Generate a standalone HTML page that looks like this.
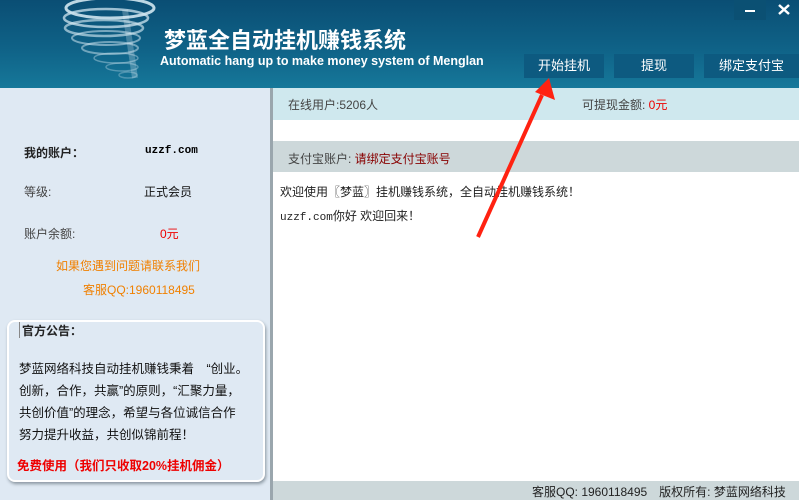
<!DOCTYPE html>
<html><head><meta charset="utf-8"><style>
*{margin:0;padding:0;box-sizing:border-box}
body{width:799px;height:500px;overflow:hidden;position:relative;font-family:"Liberation Sans","Noto Sans CJK SC",sans-serif;font-size:12px;background:#fff}
.a{position:absolute;white-space:nowrap}
#hdr{left:0;top:0;width:799px;height:88px;background:linear-gradient(180deg,#0a4e74 0%,#0f6287 55%,#16789a 100%)}
.btn{top:54px;height:24px;background:#0d5a80;color:#fff;font-size:13px;text-align:center;line-height:24px}
</style></head><body>
<div class="a" id="hdr"></div>
<svg class="a" style="left:30px;top:0" width="130" height="85" viewBox="0 0 130 85">
<g fill="none" stroke="#cfe6f0" stroke-linecap="round">
<ellipse cx="80" cy="8" rx="44" ry="10" stroke-width="3" opacity=".9"/>
<ellipse cx="76" cy="18" rx="42" ry="9" stroke-width="2.5" opacity=".75"/>
<ellipse cx="74" cy="28" rx="39" ry="8" stroke-width="2.5" opacity=".65"/>
<ellipse cx="76" cy="38" rx="34" ry="7" stroke-width="2" opacity=".55"/>
<ellipse cx="80" cy="48" rx="28" ry="6" stroke-width="2" opacity=".5"/>
<ellipse cx="86" cy="58" rx="22" ry="5" stroke-width="1.5" opacity=".4"/>
<ellipse cx="92" cy="67" rx="16" ry="4" stroke-width="1.5" opacity=".35"/>
<ellipse cx="98" cy="75" rx="9" ry="3" stroke-width="1.5" opacity=".3"/>
</g>
<path d="M95 10 Q100 45 105 78" stroke="#e8f4fa" stroke-width="6" fill="none" opacity=".25"/>
</svg>
<div class="a" style="left:164px;top:26px;color:#fff;font-size:22px;font-weight:bold;line-height:30px">梦蓝全自动挂机赚钱系统</div>
<div class="a" style="left:160px;top:54px;color:#fff;font-size:12.5px;font-weight:bold;line-height:15px">Automatic hang up to make money system of Menglan</div>
<div class="a" style="left:734px;top:0;width:32px;height:20px;background:#0b5073"></div>
<div class="a" style="left:745px;top:10px;width:10px;height:2px;background:#fff"></div>
<svg class="a" style="left:778px;top:4px" width="12" height="11"><path d="M1 1L11 10M11 1L1 10" stroke="#fff" stroke-width="2.5"/></svg>
<div class="a btn" style="left:524px;width:80px">开始挂机</div>
<div class="a btn" style="left:614px;width:80px">提现</div>
<div class="a btn" style="left:704px;width:95px">绑定支付宝</div>

<div class="a" style="left:0;top:88px;width:270px;height:412px;background:#dfe9f3"></div>
<div class="a" style="left:270px;top:88px;width:3px;height:412px;background:#9aa6ad"></div>
<div class="a" style="left:24px;top:144px;font-weight:bold;color:#222">我的账户：</div>
<div class="a" style="left:145px;top:145px;font-family:'Liberation Mono',monospace;font-weight:bold;font-size:11px">uzzf.com</div>
<div class="a" style="left:24px;top:183px;color:#444">等级:</div>
<div class="a" style="left:144px;top:183px;color:#111">正式会员</div>
<div class="a" style="left:24px;top:225px;color:#444">账户余额:</div>
<div class="a" style="left:160px;top:225px;color:#e00">0元</div>
<div class="a" style="left:56px;top:257px;color:#f08000">如果您遇到问题请联系我们</div>
<div class="a" style="left:83px;top:281px;color:#f08000">客服QQ:1960118495</div>

<div class="a" style="left:7px;top:320px;width:258px;height:162px;border:2px solid #fff;border-radius:8px;box-shadow:1px 2px 3px #8a96a0;background:#dfe9f3"></div>
<div class="a" style="left:19px;top:322px;width:1px;height:16px;background:#888"></div>
<div class="a" style="left:22px;top:322px;font-weight:bold;color:#222">官方公告：</div>
<div class="a" style="left:19px;top:358px;line-height:22px;color:#111;font-size:12.5px">梦蓝网络科技自动挂机赚钱秉着　“创业。<br>创新，合作，共赢”的原则，“汇聚力量，<br>共创价值”的理念，希望与各位诚信合作<br>努力提升收益，共创似锦前程！</div>
<div class="a" style="left:17px;top:455px;color:#e00;font-weight:bold;font-size:12.5px">免费使用（我们只收取20%挂机佣金）</div>

<div class="a" style="left:273px;top:88px;width:526px;height:32px;background:#cfe8ee"></div>
<div class="a" style="left:288px;top:96px;color:#444">在线用户:5206人</div>
<div class="a" style="left:582px;top:96px;color:#444">可提现金额: <span style="color:#e00">0元</span></div>
<div class="a" style="left:273px;top:141px;width:526px;height:31px;background:#cdd8da"></div>
<div class="a" style="left:288px;top:150px;color:#444">支付宝账户: <span style="color:#800">请绑定支付宝账号</span></div>
<div class="a" style="left:280px;top:183px;color:#222">欢迎使用〖梦蓝〗挂机赚钱系统，全自动挂机赚钱系统！</div>
<div class="a" style="left:280px;top:207px;color:#222"><span style="font-family:'Liberation Mono',monospace;font-size:11px">uzzf.com</span>你好 欢迎回来！</div>
<div class="a" style="left:273px;top:481px;width:526px;height:19px;background:#cdd8da"></div>
<div class="a" style="left:532px;top:483px;color:#222">客服QQ: 1960118495　版权所有: 梦蓝网络科技</div>

<svg class="a" style="left:0;top:0" width="799" height="500">
<line x1="478" y1="237" x2="542" y2="95" stroke="#f21" stroke-width="4"/>
<polygon points="549,78 555,100 535,92" fill="#f21"/>
</svg>
</body></html>
